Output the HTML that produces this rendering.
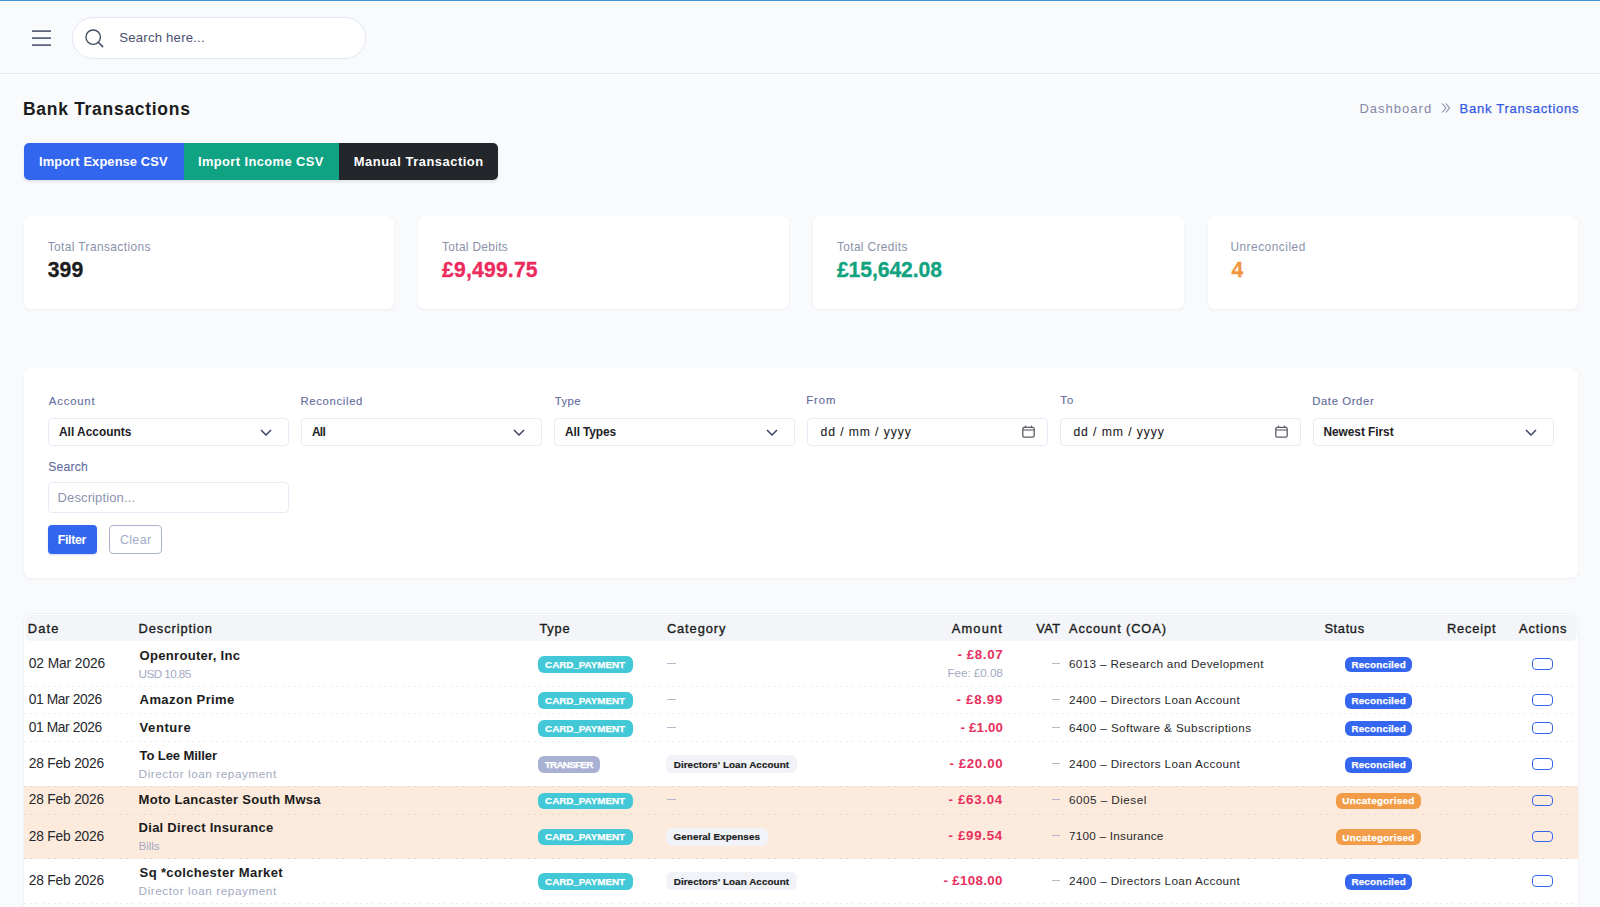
<!DOCTYPE html>
<html><head><meta charset="utf-8"><style>
*{box-sizing:border-box;margin:0;padding:0}
html,body{width:1600px;height:907px;overflow:hidden}
body{background:#f9fafc;font-family:"Liberation Sans",sans-serif;position:relative}
div,svg{position:absolute}
.t{line-height:1;white-space:nowrap}
.card{background:#fff;border-radius:6px;box-shadow:0 0 1px rgba(40,50,80,.10),0 1px 3px rgba(40,50,90,.05)}
.inp{background:#fff;border:1px solid #e7ebf5;border-radius:4px}
.bd{border-radius:6px}
</style></head><body>
<div style="left:0;top:0;width:1600px;height:1px;background:#4293da"></div>
<div style="left:0;top:73px;width:1600px;height:1px;background:#e5e9f2"></div>
<svg style="left:30px;top:26px" width="24" height="24" viewBox="0 0 24 24"><path d="M2 5.1H21M2 12.1H21M2 19.1H21" stroke="#5b637c" stroke-width="1.7"/></svg>
<div style="left:72px;top:17px;width:294px;height:42px;border:1px solid #e1e7f3;border-radius:21px;background:#fff"></div>
<svg style="left:84px;top:27.5px" width="22" height="22" viewBox="0 0 22 22"><circle cx="9.2" cy="9.2" r="7.2" fill="none" stroke="#404a63" stroke-width="1.4"/><line x1="14.3" y1="14.3" x2="18.6" y2="18.6" stroke="#404a63" stroke-width="1.5" stroke-linecap="round"/></svg>
<svg style="left:1441px;top:102px" width="10" height="12" viewBox="0 0 10 12"><path d="M1.2 1.5 L5 6 L1.2 10.5 M4.8 1.5 L8.6 6 L4.8 10.5" fill="none" stroke="#8389a8" stroke-width="1.1"/></svg>
<div style="left:24px;top:143px;width:474px;height:37px;border-radius:5px;overflow:hidden;box-shadow:0 2px 3px rgba(20,30,60,.10)"><div style="left:0;top:0;width:159.5px;height:37px;background:#3366ef"></div><div style="left:159.5px;top:0;width:155px;height:37px;background:#0fa383"></div><div style="left:314.5px;top:0;width:160px;height:37px;background:#23262b"></div></div>
<div class="card" style="left:24px;top:216px;width:370px;height:93px"></div>
<div class="card" style="left:418px;top:216px;width:371px;height:93px"></div>
<div class="card" style="left:813px;top:216px;width:371px;height:93px"></div>
<div class="card" style="left:1208px;top:216px;width:370px;height:93px"></div>
<div class="card" style="left:24px;top:368px;width:1554px;height:210px"></div>
<div class="inp" style="left:48px;top:418px;width:241px;height:28px"></div>
<svg style="left:259.5px;top:429px" width="12" height="7" viewBox="0 0 12 7"><path d="M1 1 L6 6 L11 1" fill="none" stroke="#3d4466" stroke-width="1.5"/></svg>
<div class="inp" style="left:301px;top:418px;width:241px;height:28px"></div>
<svg style="left:512.5px;top:429px" width="12" height="7" viewBox="0 0 12 7"><path d="M1 1 L6 6 L11 1" fill="none" stroke="#3d4466" stroke-width="1.5"/></svg>
<div class="inp" style="left:554px;top:418px;width:241px;height:28px"></div>
<svg style="left:765.5px;top:429px" width="12" height="7" viewBox="0 0 12 7"><path d="M1 1 L6 6 L11 1" fill="none" stroke="#3d4466" stroke-width="1.5"/></svg>
<div class="inp" style="left:807px;top:418px;width:241px;height:28px"></div>
<svg style="left:1021.5px;top:425px" width="13" height="13" viewBox="0 0 13 13"><rect x="0.8" y="2.3" width="11.4" height="9.9" rx="1.6" fill="none" stroke="#5b5e68" stroke-width="1.3"/><line x1="0.8" y1="5" x2="12.2" y2="5" stroke="#5b5e68" stroke-width="1.1"/><line x1="3.5" y1="0.6" x2="3.5" y2="3" stroke="#5b5e68" stroke-width="1.3"/><line x1="9.5" y1="0.6" x2="9.5" y2="3" stroke="#5b5e68" stroke-width="1.3"/></svg>
<div class="inp" style="left:1060px;top:418px;width:241px;height:28px"></div>
<svg style="left:1274.5px;top:425px" width="13" height="13" viewBox="0 0 13 13"><rect x="0.8" y="2.3" width="11.4" height="9.9" rx="1.6" fill="none" stroke="#5b5e68" stroke-width="1.3"/><line x1="0.8" y1="5" x2="12.2" y2="5" stroke="#5b5e68" stroke-width="1.1"/><line x1="3.5" y1="0.6" x2="3.5" y2="3" stroke="#5b5e68" stroke-width="1.3"/><line x1="9.5" y1="0.6" x2="9.5" y2="3" stroke="#5b5e68" stroke-width="1.3"/></svg>
<div class="inp" style="left:1313px;top:418px;width:241px;height:28px"></div>
<svg style="left:1524.5px;top:429px" width="12" height="7" viewBox="0 0 12 7"><path d="M1 1 L6 6 L11 1" fill="none" stroke="#3d4466" stroke-width="1.5"/></svg>
<div class="inp" style="left:48px;top:482px;width:241px;height:31px"></div>
<div style="left:48px;top:524.5px;width:49px;height:29.5px;background:#3366ef;border-radius:4px;box-shadow:0 1px 2px rgba(40,80,200,.2)"></div>
<div style="left:109px;top:524.5px;width:53px;height:29.5px;border:1px solid #a9b3cd;border-radius:4px"></div>
<div style="left:24px;top:614px;width:1554px;height:300px;background:#fff;border-radius:8px 8px 0 0;box-shadow:0 0 0 1px #eef1f7"></div>
<div style="left:25px;top:614.5px;width:1552px;height:26.5px;background:#f3f5f9;border-radius:6px"></div>
<div style="left:24px;top:786px;width:1554px;height:28px;background:#fcebdc"></div>
<div style="left:24px;top:814px;width:1554px;height:44.5px;background:#fcebdc"></div>
<div style="left:24px;top:685.5px;width:1554px;height:1px;background:repeating-linear-gradient(90deg,rgba(50,70,140,.11) 0 2px,transparent 2px 6px)"></div>
<div style="left:24px;top:713px;width:1554px;height:1px;background:repeating-linear-gradient(90deg,rgba(50,70,140,.11) 0 2px,transparent 2px 6px)"></div>
<div style="left:24px;top:741px;width:1554px;height:1px;background:repeating-linear-gradient(90deg,rgba(50,70,140,.11) 0 2px,transparent 2px 6px)"></div>
<div style="left:24px;top:785.5px;width:1554px;height:1px;background:repeating-linear-gradient(90deg,rgba(50,70,140,.11) 0 2px,transparent 2px 6px)"></div>
<div style="left:24px;top:813.5px;width:1554px;height:1px;background:repeating-linear-gradient(90deg,rgba(50,70,140,.11) 0 2px,transparent 2px 6px)"></div>
<div style="left:24px;top:858px;width:1554px;height:1px;background:repeating-linear-gradient(90deg,rgba(50,70,140,.11) 0 2px,transparent 2px 6px)"></div>
<div style="left:24px;top:902.5px;width:1554px;height:1px;background:repeating-linear-gradient(90deg,rgba(50,70,140,.11) 0 2px,transparent 2px 6px)"></div>
<div class="bd" style="left:538.4px;top:656px;width:94.4px;height:16.6px;background:#42c8d6"></div>
<div class="bd" style="left:1345px;top:656.5px;width:66.8px;height:15.8px;background:#3566ef"></div>
<div class="bd" style="left:538.4px;top:692.25px;width:94.4px;height:16.6px;background:#42c8d6"></div>
<div class="bd" style="left:1345px;top:692.75px;width:66.8px;height:15.8px;background:#3566ef"></div>
<div class="bd" style="left:538.4px;top:720px;width:94.4px;height:16.6px;background:#42c8d6"></div>
<div class="bd" style="left:1345px;top:720.5px;width:66.8px;height:15.8px;background:#3566ef"></div>
<div class="bd" style="left:538.2px;top:756.25px;width:62px;height:16.6px;background:#a9b1d3"></div>
<div class="bd" style="left:666.1px;top:755.15px;width:131.2px;height:18.2px;background:#f1f3f8"></div>
<div class="bd" style="left:1345px;top:756.75px;width:66.8px;height:15.8px;background:#3566ef"></div>
<div class="bd" style="left:538.4px;top:792.5px;width:94.4px;height:16.6px;background:#42c8d6"></div>
<div class="bd" style="left:1336.1px;top:793px;width:84.5px;height:15.8px;background:#f29c47"></div>
<div class="bd" style="left:538.4px;top:828.75px;width:94.4px;height:16.6px;background:#42c8d6"></div>
<div class="bd" style="left:666.3px;top:827.65px;width:101.5px;height:18.2px;background:#f1f3f8"></div>
<div class="bd" style="left:1336.1px;top:829.25px;width:84.5px;height:15.8px;background:#f29c47"></div>
<div class="bd" style="left:538.4px;top:873.25px;width:94.4px;height:16.6px;background:#42c8d6"></div>
<div class="bd" style="left:666.1px;top:872.15px;width:131.2px;height:18.2px;background:#f1f3f8"></div>
<div class="bd" style="left:1345px;top:873.75px;width:66.8px;height:15.8px;background:#3566ef"></div>
<div style="left:667.2px;top:662.7px;width:8.5px;height:1px;background:#b4bacb"></div>
<div style="left:1052px;top:662.7px;width:8px;height:1px;background:#b4bacb"></div>
<div style="left:667.2px;top:698.95px;width:8.5px;height:1px;background:#b4bacb"></div>
<div style="left:1052px;top:698.95px;width:8px;height:1px;background:#b4bacb"></div>
<div style="left:667.2px;top:726.7px;width:8.5px;height:1px;background:#b4bacb"></div>
<div style="left:1052px;top:726.7px;width:8px;height:1px;background:#b4bacb"></div>
<div style="left:1052px;top:762.95px;width:8px;height:1px;background:#b4bacb"></div>
<div style="left:667.2px;top:799.2px;width:8.5px;height:1px;background:#b4bacb"></div>
<div style="left:1052px;top:799.2px;width:8px;height:1px;background:#b4bacb"></div>
<div style="left:1052px;top:835.45px;width:8px;height:1px;background:#b4bacb"></div>
<div style="left:1052px;top:879.95px;width:8px;height:1px;background:#b4bacb"></div>
<div style="left:1532px;top:658.2px;width:21px;height:11.4px;border:1.3px solid #3566ef;border-radius:4px"></div>
<div style="left:1532px;top:694.45px;width:21px;height:11.4px;border:1.3px solid #3566ef;border-radius:4px"></div>
<div style="left:1532px;top:722.2px;width:21px;height:11.4px;border:1.3px solid #3566ef;border-radius:4px"></div>
<div style="left:1532px;top:758.45px;width:21px;height:11.4px;border:1.3px solid #3566ef;border-radius:4px"></div>
<div style="left:1532px;top:794.7px;width:21px;height:11.4px;border:1.3px solid #3566ef;border-radius:4px"></div>
<div style="left:1532px;top:830.95px;width:21px;height:11.4px;border:1.3px solid #3566ef;border-radius:4px"></div>
<div style="left:1532px;top:875.45px;width:21px;height:11.4px;border:1.3px solid #3566ef;border-radius:4px"></div>
<div class="t" style="left:119.3px;top:31px;font-size:13.19px;font-weight:400;letter-spacing:0.192px;color:#4a5170;">Search here...</div>
<div class="t" style="left:23px;top:101px;font-size:17.54px;font-weight:700;letter-spacing:0.688px;color:#1b1c20;">Bank Transactions</div>
<div class="t" style="left:1359.4px;top:102px;font-size:13.04px;font-weight:400;letter-spacing:1.0px;color:#8389a8;">Dashboard</div>
<div class="t" style="left:1459.6px;top:102px;font-size:13.04px;font-weight:400;letter-spacing:0.731px;color:#3459e3;-webkit-text-stroke:0.25px #3459e3;">Bank Transactions</div>
<div class="t" style="left:39px;top:156px;font-size:12.9px;font-weight:700;letter-spacing:0.103px;color:#ffffff;">Import Expense CSV</div>
<div class="t" style="left:197.9px;top:156px;font-size:12.9px;font-weight:700;letter-spacing:0.406px;color:#ffffff;">Import Income CSV</div>
<div class="t" style="left:353.8px;top:156px;font-size:12.9px;font-weight:700;letter-spacing:0.529px;color:#ffffff;">Manual Transaction</div>
<div class="t" style="left:47.7px;top:242px;font-size:11.88px;font-weight:400;letter-spacing:0.412px;color:#8a91ab;">Total Transactions</div>
<div class="t" style="left:47.7px;top:259px;font-size:21.16px;font-weight:700;letter-spacing:0.1px;color:#1b1c20;-webkit-text-stroke:0.3px #1b1c20;">399</div>
<div class="t" style="left:442.1px;top:242px;font-size:11.88px;font-weight:400;letter-spacing:0.327px;color:#8a91ab;">Total Debits</div>
<div class="t" style="left:442.1px;top:259px;font-size:21.16px;font-weight:700;letter-spacing:0.175px;color:#ec2b5c;-webkit-text-stroke:0.3px #ec2b5c;">£9,499.75</div>
<div class="t" style="left:836.9px;top:242px;font-size:11.88px;font-weight:400;letter-spacing:0.383px;color:#8a91ab;">Total Credits</div>
<div class="t" style="left:836.9px;top:259px;font-size:21.16px;font-weight:700;letter-spacing:-0.089px;color:#0fa37f;-webkit-text-stroke:0.3px #0fa37f;">£15,642.08</div>
<div class="t" style="left:1230.4px;top:242px;font-size:11.88px;font-weight:400;letter-spacing:0.509px;color:#8a91ab;">Unreconciled</div>
<div class="t" style="left:1231.4px;top:259px;font-size:21.16px;font-weight:700;letter-spacing:0px;color:#f2963e;-webkit-text-stroke:0.3px #f2963e;">4</div>
<div class="t" style="left:48.8px;top:396px;font-size:11.3px;font-weight:400;letter-spacing:0.833px;color:#636c9e;-webkit-text-stroke:0.12px #636c9e;">Account</div>
<div class="t" style="left:300.5px;top:396px;font-size:11.3px;font-weight:400;letter-spacing:0.667px;color:#636c9e;-webkit-text-stroke:0.12px #636c9e;">Reconciled</div>
<div class="t" style="left:554.7px;top:396px;font-size:11.3px;font-weight:400;letter-spacing:0.433px;color:#636c9e;-webkit-text-stroke:0.12px #636c9e;">Type</div>
<div class="t" style="left:806.2px;top:395px;font-size:11.3px;font-weight:400;letter-spacing:0.933px;color:#636c9e;-webkit-text-stroke:0.12px #636c9e;">From</div>
<div class="t" style="left:1060.25px;top:395px;font-size:11.3px;font-weight:400;letter-spacing:1.1px;color:#636c9e;-webkit-text-stroke:0.12px #636c9e;">To</div>
<div class="t" style="left:1312.2px;top:396px;font-size:11.3px;font-weight:400;letter-spacing:0.622px;color:#636c9e;-webkit-text-stroke:0.12px #636c9e;">Date Order</div>
<div class="t" style="left:59px;top:427px;font-size:11.88px;font-weight:700;letter-spacing:0.018px;color:#1e2126;">All Accounts</div>
<div class="t" style="left:312px;top:427px;font-size:11.88px;font-weight:700;letter-spacing:-0.75px;color:#1e2126;">All</div>
<div class="t" style="left:565px;top:427px;font-size:11.88px;font-weight:700;letter-spacing:-0.1px;color:#1e2126;">All Types</div>
<div class="t" style="left:820.5px;top:426px;font-size:12.2px;font-weight:400;letter-spacing:0.9px;color:#1e2126;-webkit-text-stroke:0.1px #1e2126;">dd / mm / yyyy</div>
<div class="t" style="left:1073.4px;top:426px;font-size:12.2px;font-weight:400;letter-spacing:0.923px;color:#1e2126;-webkit-text-stroke:0.1px #1e2126;">dd / mm / yyyy</div>
<div class="t" style="left:1323.5px;top:427px;font-size:11.88px;font-weight:700;letter-spacing:-0.045px;color:#1e2126;">Newest First</div>
<div class="t" style="left:48.3px;top:461px;font-size:12.17px;font-weight:400;letter-spacing:0.18px;color:#636c9e;-webkit-text-stroke:0.12px #636c9e;">Search</div>
<div class="t" style="left:57.5px;top:491px;font-size:13.04px;font-weight:400;letter-spacing:0.115px;color:#8c93b0;">Description...</div>
<div class="t" style="left:57.75px;top:534px;font-size:12.46px;font-weight:700;letter-spacing:-0.38px;color:#ffffff;">Filter</div>
<div class="t" style="left:119.9px;top:534px;font-size:12.46px;font-weight:400;letter-spacing:0.35px;color:#a3abc6;">Clear</div>
<div class="t" style="left:27.75px;top:623px;font-size:12.83px;font-weight:400;letter-spacing:1.2px;color:#1b1c20;-webkit-text-stroke:0.35px #1b1c20;">Date</div>
<div class="t" style="left:138.6px;top:623px;font-size:12.83px;font-weight:400;letter-spacing:0.91px;color:#1b1c20;-webkit-text-stroke:0.35px #1b1c20;">Description</div>
<div class="t" style="left:539.4px;top:623px;font-size:12.83px;font-weight:400;letter-spacing:0.8px;color:#1b1c20;-webkit-text-stroke:0.35px #1b1c20;">Type</div>
<div class="t" style="left:666.9px;top:623px;font-size:12.83px;font-weight:400;letter-spacing:0.914px;color:#1b1c20;-webkit-text-stroke:0.35px #1b1c20;">Category</div>
<div class="t" style="left:1036.3px;top:623px;font-size:12.83px;font-weight:400;letter-spacing:0.35px;color:#1b1c20;-webkit-text-stroke:0.35px #1b1c20;">VAT</div>
<div class="t" style="left:1069px;top:623px;font-size:12.83px;font-weight:400;letter-spacing:0.892px;color:#1b1c20;-webkit-text-stroke:0.35px #1b1c20;">Account (COA)</div>
<div class="t" style="left:1324.4px;top:623px;font-size:12.83px;font-weight:400;letter-spacing:0.66px;color:#1b1c20;-webkit-text-stroke:0.35px #1b1c20;">Status</div>
<div class="t" style="left:1447px;top:623px;font-size:12.83px;font-weight:400;letter-spacing:0.833px;color:#1b1c20;-webkit-text-stroke:0.35px #1b1c20;">Receipt</div>
<div class="t" style="left:1519px;top:623px;font-size:12.83px;font-weight:400;letter-spacing:0.883px;color:#1b1c20;-webkit-text-stroke:0.35px #1b1c20;">Actions</div>
<div class="t" style="left:951.8px;top:623px;font-size:12.83px;font-weight:400;letter-spacing:1.16px;color:#1b1c20;-webkit-text-stroke:0.35px #1b1c20;">Amount</div>
<div class="t" style="left:28.8px;top:657px;font-size:13.77px;font-weight:400;letter-spacing:-0.09px;color:#26282c;">02 Mar 2026</div>
<div class="t" style="left:139.6px;top:649px;font-size:13.04px;font-weight:700;letter-spacing:0.286px;color:#1b1c20;">Openrouter, Inc</div>
<div class="t" style="left:138.6px;top:668px;font-size:11.74px;font-weight:400;letter-spacing:-0.588px;color:#a3aac2;">USD 10.85</div>
<div class="t" style="left:957.5px;top:648px;font-size:13.33px;font-weight:700;letter-spacing:0.6px;color:#e8305e;">- £8.07</div>
<div class="t" style="left:947.4px;top:667px;font-size:11.74px;font-weight:400;letter-spacing:-0.067px;color:#a3aac2;">Fee: £0.08</div>
<div class="t" style="left:1069px;top:658px;font-size:11.74px;font-weight:400;letter-spacing:0.327px;color:#26282c;">6013 – Research and Development</div>
<div class="t" style="left:545.1px;top:660px;font-size:9.86px;font-weight:700;letter-spacing:-0.036px;color:#ffffff;-webkit-text-stroke:0.25px #ffffff;">CARD_PAYMENT</div>
<div class="t" style="left:1351.4px;top:660px;font-size:9.86px;font-weight:700;letter-spacing:0.2px;color:#ffffff;-webkit-text-stroke:0.25px #ffffff;">Reconciled</div>
<div class="t" style="left:28.8px;top:693px;font-size:13.77px;font-weight:400;letter-spacing:-0.4px;color:#26282c;">01 Mar 2026</div>
<div class="t" style="left:139.6px;top:693px;font-size:13.04px;font-weight:700;letter-spacing:0.382px;color:#1b1c20;">Amazon Prime</div>
<div class="t" style="left:956.5px;top:693px;font-size:13.33px;font-weight:700;letter-spacing:0.733px;color:#e8305e;">- £8.99</div>
<div class="t" style="left:1069px;top:694px;font-size:11.74px;font-weight:400;letter-spacing:0.364px;color:#26282c;">2400 – Directors Loan Account</div>
<div class="t" style="left:545.1px;top:696px;font-size:9.86px;font-weight:700;letter-spacing:-0.036px;color:#ffffff;-webkit-text-stroke:0.25px #ffffff;">CARD_PAYMENT</div>
<div class="t" style="left:1351.4px;top:696px;font-size:9.86px;font-weight:700;letter-spacing:0.2px;color:#ffffff;-webkit-text-stroke:0.25px #ffffff;">Reconciled</div>
<div class="t" style="left:28.8px;top:721px;font-size:13.77px;font-weight:400;letter-spacing:-0.4px;color:#26282c;">01 Mar 2026</div>
<div class="t" style="left:139.6px;top:721px;font-size:13.04px;font-weight:700;letter-spacing:0.55px;color:#1b1c20;">Venture</div>
<div class="t" style="left:960.5px;top:721px;font-size:13.33px;font-weight:700;letter-spacing:0.167px;color:#e8305e;">- £1.00</div>
<div class="t" style="left:1069px;top:722px;font-size:11.74px;font-weight:400;letter-spacing:0.393px;color:#26282c;">6400 – Software &amp; Subscriptions</div>
<div class="t" style="left:545.1px;top:724px;font-size:9.86px;font-weight:700;letter-spacing:-0.036px;color:#ffffff;-webkit-text-stroke:0.25px #ffffff;">CARD_PAYMENT</div>
<div class="t" style="left:1351.4px;top:724px;font-size:9.86px;font-weight:700;letter-spacing:0.2px;color:#ffffff;-webkit-text-stroke:0.25px #ffffff;">Reconciled</div>
<div class="t" style="left:28.8px;top:757px;font-size:13.77px;font-weight:400;letter-spacing:-0.19px;color:#26282c;">28 Feb 2026</div>
<div class="t" style="left:139.6px;top:749px;font-size:13.04px;font-weight:700;letter-spacing:-0.1px;color:#1b1c20;">To Lee Miller</div>
<div class="t" style="left:138.6px;top:768px;font-size:11.74px;font-weight:400;letter-spacing:0.564px;color:#a3aac2;">Director loan repayment</div>
<div class="t" style="left:949.5px;top:757px;font-size:13.33px;font-weight:700;letter-spacing:0.6px;color:#e8305e;">- £20.00</div>
<div class="t" style="left:1069px;top:758px;font-size:11.74px;font-weight:400;letter-spacing:0.364px;color:#26282c;">2400 – Directors Loan Account</div>
<div class="t" style="left:544.7px;top:760px;font-size:9.86px;font-weight:700;letter-spacing:-0.714px;color:#ffffff;-webkit-text-stroke:0.25px #ffffff;">TRANSFER</div>
<div class="t" style="left:673.7px;top:760px;font-size:9.86px;font-weight:700;letter-spacing:0.082px;color:#1b1c20;-webkit-text-stroke:0.2px #1b1c20;">Directors&#x27; Loan Account</div>
<div class="t" style="left:1351.4px;top:760px;font-size:9.86px;font-weight:700;letter-spacing:0.2px;color:#ffffff;-webkit-text-stroke:0.25px #ffffff;">Reconciled</div>
<div class="t" style="left:28.8px;top:793px;font-size:13.77px;font-weight:400;letter-spacing:-0.19px;color:#26282c;">28 Feb 2026</div>
<div class="t" style="left:138.6px;top:793px;font-size:13.04px;font-weight:700;letter-spacing:0.25px;color:#1b1c20;">Moto Lancaster South Mwsa</div>
<div class="t" style="left:948.5px;top:793px;font-size:13.33px;font-weight:700;letter-spacing:0.686px;color:#e8305e;">- £63.04</div>
<div class="t" style="left:1069px;top:794px;font-size:11.74px;font-weight:400;letter-spacing:0.458px;color:#26282c;">6005 – Diesel</div>
<div class="t" style="left:545.1px;top:796px;font-size:9.86px;font-weight:700;letter-spacing:-0.036px;color:#ffffff;-webkit-text-stroke:0.25px #ffffff;">CARD_PAYMENT</div>
<div class="t" style="left:1342.35px;top:796px;font-size:9.86px;font-weight:700;letter-spacing:0.292px;color:#ffffff;-webkit-text-stroke:0.25px #ffffff;">Uncategorised</div>
<div class="t" style="left:28.8px;top:830px;font-size:13.77px;font-weight:400;letter-spacing:-0.19px;color:#26282c;">28 Feb 2026</div>
<div class="t" style="left:138.6px;top:821px;font-size:13.04px;font-weight:700;letter-spacing:0.25px;color:#1b1c20;">Dial Direct Insurance</div>
<div class="t" style="left:138.6px;top:840px;font-size:11.74px;font-weight:400;letter-spacing:-0.1px;color:#a3aac2;">Bills</div>
<div class="t" style="left:948.5px;top:829px;font-size:13.33px;font-weight:700;letter-spacing:0.686px;color:#e8305e;">- £99.54</div>
<div class="t" style="left:1069px;top:830px;font-size:11.74px;font-weight:400;letter-spacing:0.24px;color:#26282c;">7100 – Insurance</div>
<div class="t" style="left:545.1px;top:832px;font-size:9.86px;font-weight:700;letter-spacing:-0.036px;color:#ffffff;-webkit-text-stroke:0.25px #ffffff;">CARD_PAYMENT</div>
<div class="t" style="left:673.55px;top:832px;font-size:9.86px;font-weight:700;letter-spacing:0.067px;color:#1b1c20;-webkit-text-stroke:0.2px #1b1c20;">General Expenses</div>
<div class="t" style="left:1342.35px;top:833px;font-size:9.86px;font-weight:700;letter-spacing:0.292px;color:#ffffff;-webkit-text-stroke:0.25px #ffffff;">Uncategorised</div>
<div class="t" style="left:28.8px;top:874px;font-size:13.77px;font-weight:400;letter-spacing:-0.19px;color:#26282c;">28 Feb 2026</div>
<div class="t" style="left:139.6px;top:866px;font-size:13.04px;font-weight:700;letter-spacing:0.34px;color:#1b1c20;">Sq *colchester Market</div>
<div class="t" style="left:138.6px;top:885px;font-size:11.74px;font-weight:400;letter-spacing:0.564px;color:#a3aac2;">Director loan repayment</div>
<div class="t" style="left:943.5px;top:874px;font-size:13.33px;font-weight:700;letter-spacing:0.338px;color:#e8305e;">- £108.00</div>
<div class="t" style="left:1069px;top:875px;font-size:11.74px;font-weight:400;letter-spacing:0.364px;color:#26282c;">2400 – Directors Loan Account</div>
<div class="t" style="left:545.1px;top:877px;font-size:9.86px;font-weight:700;letter-spacing:-0.036px;color:#ffffff;-webkit-text-stroke:0.25px #ffffff;">CARD_PAYMENT</div>
<div class="t" style="left:673.7px;top:877px;font-size:9.86px;font-weight:700;letter-spacing:0.082px;color:#1b1c20;-webkit-text-stroke:0.2px #1b1c20;">Directors&#x27; Loan Account</div>
<div class="t" style="left:1351.4px;top:877px;font-size:9.86px;font-weight:700;letter-spacing:0.2px;color:#ffffff;-webkit-text-stroke:0.25px #ffffff;">Reconciled</div>
</body></html>
